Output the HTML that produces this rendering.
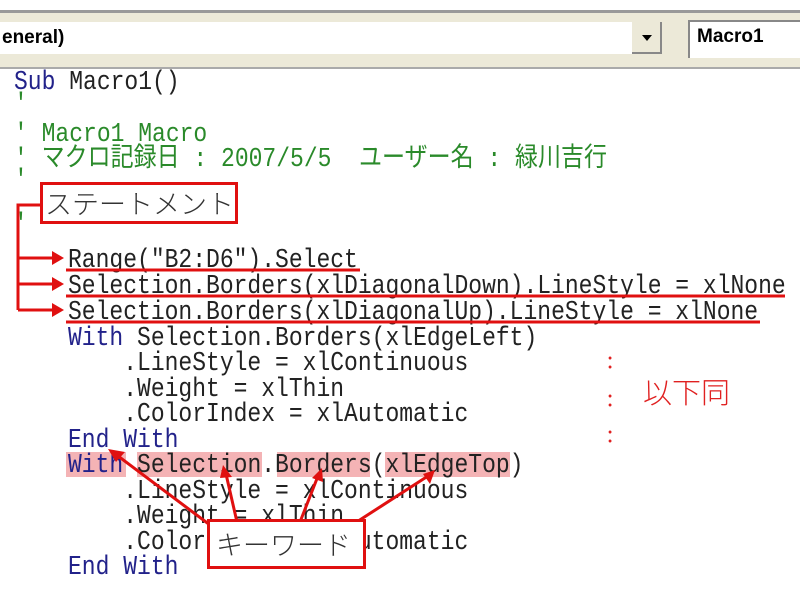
<!DOCTYPE html>
<html><head><meta charset="utf-8"><style>
body{margin:0;width:800px;height:600px;background:#fff;position:relative;overflow:hidden;font-family:"Liberation Mono","Noto Sans CJK JP",monospace;}
.l{position:absolute;font-size:23px;line-height:26px;white-space:pre;color:#222;transform:scaleY(1.15);transform-origin:left top;margin-top:1px}
.k{color:#22228a}.c{color:#2a8a2a}
.hl{position:absolute;background:#f4b3b5;height:25px;top:452px}
.box{position:absolute;border:3px solid #e01010;background:#fff;font-family:"Noto Sans CJK JP",sans-serif;color:#333;font-size:27px;font-weight:300}
</style></head><body>
<div style="position:absolute;left:0;top:10px;width:800px;height:54px;background:#ece9d8;border-top:3px solid #999;border-bottom:2px solid #aaa"></div>
<div style="position:absolute;left:0;top:22px;width:632px;height:32px;background:#fff"></div>
<div style="position:absolute;left:2px;top:27px;font:bold 19px 'Liberation Sans',sans-serif">eneral)</div>
<div style="position:absolute;left:632px;top:22px;width:30px;height:32px;background:#ece9d8;border-right:2px solid #888;border-bottom:2px solid #888;box-sizing:border-box"><div style="position:absolute;left:10px;top:13px;width:0;height:0;border-left:5px solid transparent;border-right:5px solid transparent;border-top:6px solid #000"></div></div>
<div style="position:absolute;left:688px;top:20px;width:112px;height:36px;background:#fff;border-left:2px solid #888;border-top:2px solid #888"></div>
<div style="position:absolute;left:697px;top:26px;font:bold 19px 'Liberation Sans',sans-serif">Macro1</div>

<div class="hl" style="left:66px;width:60px"></div>
<div class="hl" style="left:137px;width:125px"></div>
<div class="hl" style="left:277px;width:93px"></div>
<div class="hl" style="left:385px;width:125px"></div>

<div class="l" style="left:14px;top:66px"><span class="k">Sub</span> Macro1()</div>
<div class="l c" style="left:14px;top:88px">'</div>
<div class="l c" style="left:14px;top:118px">' Macro1 Macro</div>
<div class="l c" style="left:14px;top:143px">' マクロ記録日 : 2007/5/5  ユーザー名 : 緑川吉行</div>
<div class="l c" style="left:14px;top:164px">'</div>
<div class="l c" style="left:14px;top:208px">'</div>
<div class="l" style="left:68px;top:244px">Range("B2:D6").Select</div>
<div class="l" style="left:68px;top:270px">Selection.Borders(xlDiagonalDown).LineStyle = xlNone</div>
<div class="l" style="left:68px;top:296px">Selection.Borders(xlDiagonalUp).LineStyle = xlNone</div>
<div class="l" style="left:68px;top:322px"><span class="k">With</span> Selection.Borders(xlEdgeLeft)</div>
<div class="l" style="left:68px;top:347px">    .LineStyle = xlContinuous</div>
<div class="l" style="left:68px;top:373px">    .Weight = xlThin</div>
<div class="l" style="left:68px;top:398px">    .ColorIndex = xlAutomatic</div>
<div class="l" style="left:68px;top:424px"><span class="k">End With</span></div>
<div class="l" style="left:68px;top:449px"><span class="k">With</span> Selection.Borders(xlEdgeTop)</div>
<div class="l" style="left:68px;top:475px">    .LineStyle = xlContinuous</div>
<div class="l" style="left:68px;top:500px">    .Weight = xlThin</div>
<div class="l" style="left:68px;top:526px">    .ColorIndex = xlAutomatic</div>
<div class="l" style="left:68px;top:551px"><span class="k">End With</span></div>

<div style="position:absolute;left:607px;top:340px;color:#e02020;font-size:22px;line-height:38px;font-family:'Noto Sans CJK JP',sans-serif">:</div>
<div style="position:absolute;left:607px;top:378px;color:#e02020;font-size:22px;line-height:38px;font-family:'Noto Sans CJK JP',sans-serif">:</div>
<div style="position:absolute;left:607px;top:414px;color:#e02020;font-size:22px;line-height:38px;font-family:'Noto Sans CJK JP',sans-serif">:</div>
<div style="position:absolute;left:643px;top:372px;color:#e02020;font-size:29px;font-weight:300;line-height:38px;font-family:'Noto Sans CJK JP',sans-serif">以下同</div>

<svg style="position:absolute;left:0;top:0" width="800" height="600">
<g stroke="#e01010" stroke-width="3" fill="none">
<path d="M18 310V205H40"/>
<path d="M18 258H54M18 284H54M18 310H54"/>
<path d="M66 270H360M66 296H785M66 322H760"/>
<path d="M214 528L118 456M237 522L226 474M300 522L318 476M352 525L428 476"/>
</g>
<g fill="#e01010">
<path d="M64 258l-12 -7v14z M64 284l-12 -7v14z M64 310l-12 -7v14z"/>
<path d="M108 449l17 3-9 10z"/>
<path d="M223 465l9 12-12 1z"/>
<path d="M322 468l1 14-11-4z"/>
<path d="M435 470l-5 14-7-10z"/>
</g>
</svg>
<div class="box" style="left:40px;top:182px;width:190px;height:36px;line-height:36px;padding-left:2px">ステートメント</div>
<div class="box" style="left:207px;top:519px;width:147px;height:44px;line-height:44px;padding-left:6px">キーワード</div>
</body></html>
